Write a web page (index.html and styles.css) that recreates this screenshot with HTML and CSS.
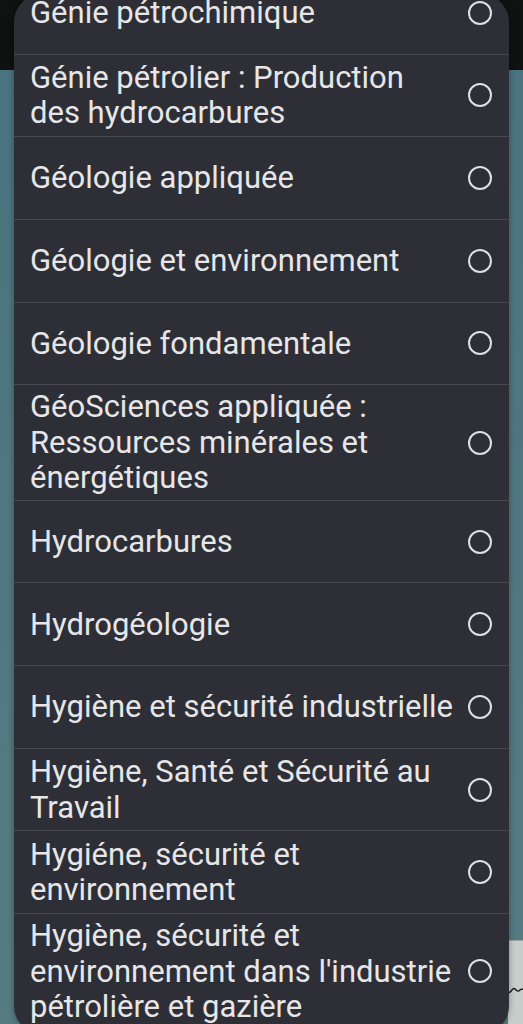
FILE: index.html
```html
<!DOCTYPE html>
<html lang="fr">
<head>
<meta charset="UTF-8" />
<meta name="viewport" content="width=device-width, initial-scale=1" />
<title>Spécialité</title>
<link rel="stylesheet" href="styles.css">
</head>
<body>
<!-- page derrière la boîte de dialogue -->
<div class="backdrop">
  <div class="top-bar"></div>
  <div class="page">
    <div class="page-side"></div>
    <div class="page-card">
      <svg class="scribble" width="16" height="14" viewBox="0 0 16 14">
        <path d="M0 10 C3 8 4 4 6 6 C8 8 9 9 11 7 C12 6 14 6 16 7" fill="none" stroke="#111" stroke-width="1.3" />
      </svg>
    </div>
  </div>
</div>

<!-- liste de choix -->
<div class="dialog">
  <ul class="choice-list">
    <li class="choice"><span class="label">Génie pétrochimique</span><span class="radio"></span></li>
    <li class="choice"><span class="label">Génie pétrolier : Production des hydrocarbures</span><span class="radio"></span></li>
    <li class="choice"><span class="label">Géologie appliquée</span><span class="radio"></span></li>
    <li class="choice"><span class="label">Géologie et environnement</span><span class="radio"></span></li>
    <li class="choice"><span class="label">Géologie fondamentale</span><span class="radio"></span></li>
    <li class="choice"><span class="label">GéoSciences appliquée : Ressources minérales et énergétiques</span><span class="radio"></span></li>
    <li class="choice"><span class="label">Hydrocarbures</span><span class="radio"></span></li>
    <li class="choice"><span class="label">Hydrogéologie</span><span class="radio"></span></li>
    <li class="choice"><span class="label">Hygiène et sécurité industrielle</span><span class="radio"></span></li>
    <li class="choice"><span class="label">Hygiène, Santé et Sécurité au Travail</span><span class="radio"></span></li>
    <li class="choice"><span class="label">Hygiéne, sécurité et environnement</span><span class="radio"></span></li>
    <li class="choice"><span class="label">Hygiène, sécurité et environnement dans l'industrie pétrolière et gazière</span><span class="radio"></span></li>
  </ul>
</div>
</body>
</html>
```

FILE: styles.css
```css
  * {
    box-sizing: border-box;
  }
  body {
    margin: 0;
    height: 1024px;
    overflow: hidden;
    font-family: Roboto, "Noto Sans", sans-serif;
    background: #4d7580;
    position: relative;
  }

  /* arrière-plan */
  .backdrop {
    height: 100%;
    display: flex;
    flex-direction: column;
  }
  .top-bar {
    height: 70px;
    background: #0e1211;
  }
  .page {
    flex: 1;
    display: flex;
    flex-direction: column;
    background: linear-gradient(180deg, #4b7480, #567b82);
  }
  .page-side {
    flex: 1;
  }
  .page-card {
    height: 84px;
    margin-left: 508px;
    background: #c7cdcb;
    border-top: 1px solid #9aa6a5;
    padding-top: 42px;
  }
  .scribble {
    display: block;
    margin-left: 1px;
  }

  /* boîte de dialogue */
  .dialog {
    position: absolute;
    top: -6px;
    left: 14px;
    width: 495px;
    height: 1040px;
    background: #2e2f36;
    border-radius: 28px;
    overflow: hidden;
    box-shadow: 0 0 6px rgba(0, 0, 0, 0.35);
  }
  .choice-list {
    list-style: none;
    margin: -22px 0 0 0;
    padding: 0;
  }
  .choice {
    display: flex;
    align-items: center;
    gap: 12px;
    min-height: 82.67px;
    padding: 4px 17px 4px 16px;
    border-bottom: 1px solid #47484e;
    color: #e6e6e8;
    font-size: 31px;
    line-height: 35.5px;
  }
  .label {
    flex: 1;
  }
  .radio {
    flex-shrink: 0;
    width: 24px;
    height: 24px;
    border: 2.5px solid #dedfe2;
    border-radius: 50%;
  }
```
